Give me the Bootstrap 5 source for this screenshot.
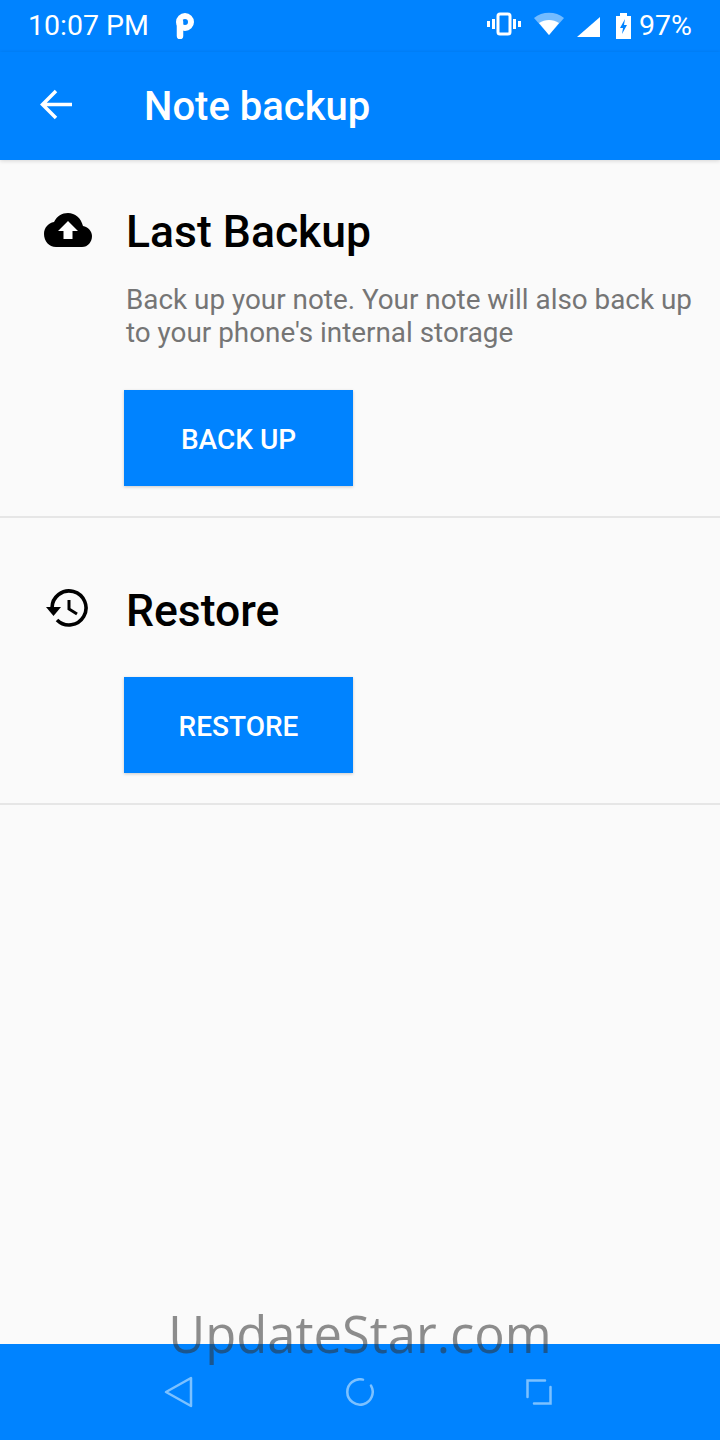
<!DOCTYPE html>
<html lang="en">
<head>
    <meta charset="UTF-8">
    <meta name="viewport" content="width=device-width, initial-scale=1.0">
    <title>Note backup</title>
    <link href="https://cdn.jsdelivr.net/npm/bootstrap@5.3.0/dist/css/bootstrap.min.css" rel="stylesheet">
    <style>
        body {
            background: #fafafa;
            font-family: Roboto, sans-serif;
        }
        .screen {
            height: 1440px;
            width: 720px;
            overflow: hidden;
        }
        .blue-bar {
            background: #0083ff;
            color: #fff;
        }
        .status-row {
            height: 52px;
            padding: 0 28px;
            font-size: 28.5px;
        }
        .status-gap {
            margin-left: 13px;
        }
        .app-row {
            height: 108px;
            padding: 2px 0 0 40px;
            box-shadow: 0 1px 4px rgba(0, 0, 0, .15);
        }
        .app-title {
            font-size: 40px;
            font-weight: 500;
            margin-left: 72px;
        }
        .backup-block {
            border-bottom: 2px solid #e6e6e6;
            padding-bottom: 30px;
        }
        .first-block {
            padding-top: 47px;
        }
        .second-block {
            padding-top: 68px;
        }
        .block-icon {
            width: 126px;
            flex-shrink: 0;
        }
        .cloud-icon {
            margin: 6px 0 0 44px;
        }
        .history-icon {
            margin: 2px 0 0 46px;
        }
        .block-title {
            font-size: 44.5px;
            font-weight: 500;
            color: #000;
            margin: 0;
            line-height: 50px;
        }
        .block-text {
            font-size: 27.85px;
            line-height: 33px;
            color: #757575;
            margin: 26px 0 0;
            white-space: nowrap;
        }
        .act-btn {
            display: block;
            width: 229px;
            height: 96px;
            margin: 41px 0 0 -2px;
            padding-top: 10px;
            background: #0083ff;
            color: #fff;
            font-size: 28px;
            font-weight: 500;
            border: 0;
            border-radius: 0;
            box-shadow: 0 1px 3px rgba(0, 0, 0, .2);
        }
        .nav-row {
            height: 96px;
            margin-top: auto;
            padding-right: 4px;
            gap: 152px;
        }
        .stamp {
            position: absolute;
            left: 0;
            right: 0;
            top: 1299px;
            text-align: center;
            font-family: "Open Sans", sans-serif;
            font-weight: 400;
            font-size: 50.7px;
            line-height: 70px;
            color: rgba(50, 50, 50, .55);
        }
    </style>
</head>
<body>
<div class="screen d-flex flex-column position-relative">
    <div class="blue-bar">
        <div class="status-row d-flex align-items-center">
            <span>10:07 PM</span>
            <svg class="ms-4" width="24" height="26" viewBox="0 0 24 26" fill="none" stroke="#fff"><path d="M7 23V9" stroke-width="6.500" stroke-linecap="round"/><circle cx="12" cy="9" r="6" stroke-width="6"/></svg>
            <div class="ms-auto d-flex align-items-center">
                <svg width="34" height="28" viewBox="0 0 34 28" fill="none" stroke="#fff" stroke-width="3"><rect x="11" y="2" width="12" height="20" rx="2"/><path d="M6.500 7v10M27.500 7v10" /><path d="M1.500 9v6M32.500 9v6"/></svg>
                <svg class="status-gap" width="30" height="28" viewBox="0 0 30 28"><path d="M0 6C8-1 22-1 30 6L15 23z" fill="#fff" opacity=".45"/><path d="M5 11c6-4 14-4 20 0L15 23z" fill="#fff"/></svg>
                <svg class="status-gap" width="23" height="24" viewBox="0 0 23 24"><path d="M0 23 23 3v20z" fill="#fff"/></svg>
                <svg class="ms-3" width="15" height="26" viewBox="0 0 15 26"><path d="M4 0h7v3h4v23H0V3h4z" fill="#fff"/><path d="M9 6 4 15h3l-1 6 5-9H8z" fill="#0083ff"/></svg>
                <span class="ms-2">97%</span>
            </div>
        </div>
        <div class="app-row d-flex align-items-center">
            <svg width="32" height="36" viewBox="0 0 32 36" fill="none" stroke="#fff" stroke-width="3.500"><path d="M32 15.500H3M16 2 2.500 15.500 16 29"/></svg>
            <div class="app-title">Note backup</div>
        </div>
    </div>

    <section class="backup-block first-block d-flex">
        <div class="block-icon">
            <svg class="cloud-icon" width="48" height="34" viewBox="0 0 48 34"><path d="M39 13C37 5 31 0 24 0 18 0 13 3 10 9 4 10 0 15 0 21c0 7 5 13 12 13h26c6 0 10-5 10-11 0-5-4-9-9-10z" fill="#000"/><path d="M24 8 14 18h5.500v8h9v-8H34z" fill="#fff"/></svg>
        </div>
        <div class="flex-grow-1">
            <h2 class="block-title">Last Backup</h2>
            <p class="block-text">Back up your note. Your note will also back up<br>to your phone's internal storage</p>
            <button class="btn act-btn">BACK UP</button>
        </div>
    </section>

    <section class="backup-block second-block d-flex">
        <div class="block-icon">
            <svg class="history-icon" width="44" height="40" viewBox="0 0 44 40" fill="none" stroke="#000" stroke-width="3.600"><path d="M6 20a17 17 0 1 1 5 12"/><path d="M0 19h15l-7.500 9z" fill="#000" stroke="none"/><path d="M23 12v9l8 5" stroke-width="3"/></svg>
        </div>
        <div class="flex-grow-1">
            <h2 class="block-title">Restore</h2>
            <button class="btn act-btn">RESTORE</button>
        </div>
    </section>

    <div class="blue-bar nav-row d-flex align-items-center justify-content-center">
        <svg width="30" height="32" viewBox="0 0 30 32" fill="none" stroke="#7cc1ff" stroke-width="2.500" stroke-linecap="round" stroke-linejoin="round"><path d="M27 2v28L2 16z"/></svg>
        <svg width="28" height="28" viewBox="0 0 28 28" fill="none" stroke="#7cc1ff" stroke-width="2.500" stroke-linecap="round"><path d="M25 7.600A12.700 12.700 0 1 1 17 1.600"/></svg>
        <svg width="26" height="26" viewBox="0 0 26 26" fill="none" stroke="#7cc1ff" stroke-width="2.500" stroke-linecap="round"><path d="M19 1.500H1.500V18M24.500 8v16.500H8"/></svg>
    </div>
    <div class="stamp">UpdateStar.com</div>
</div>
<script src="https://cdn.jsdelivr.net/npm/bootstrap@5.3.0/dist/js/bootstrap.bundle.min.js"></script>
</body>
</html>
